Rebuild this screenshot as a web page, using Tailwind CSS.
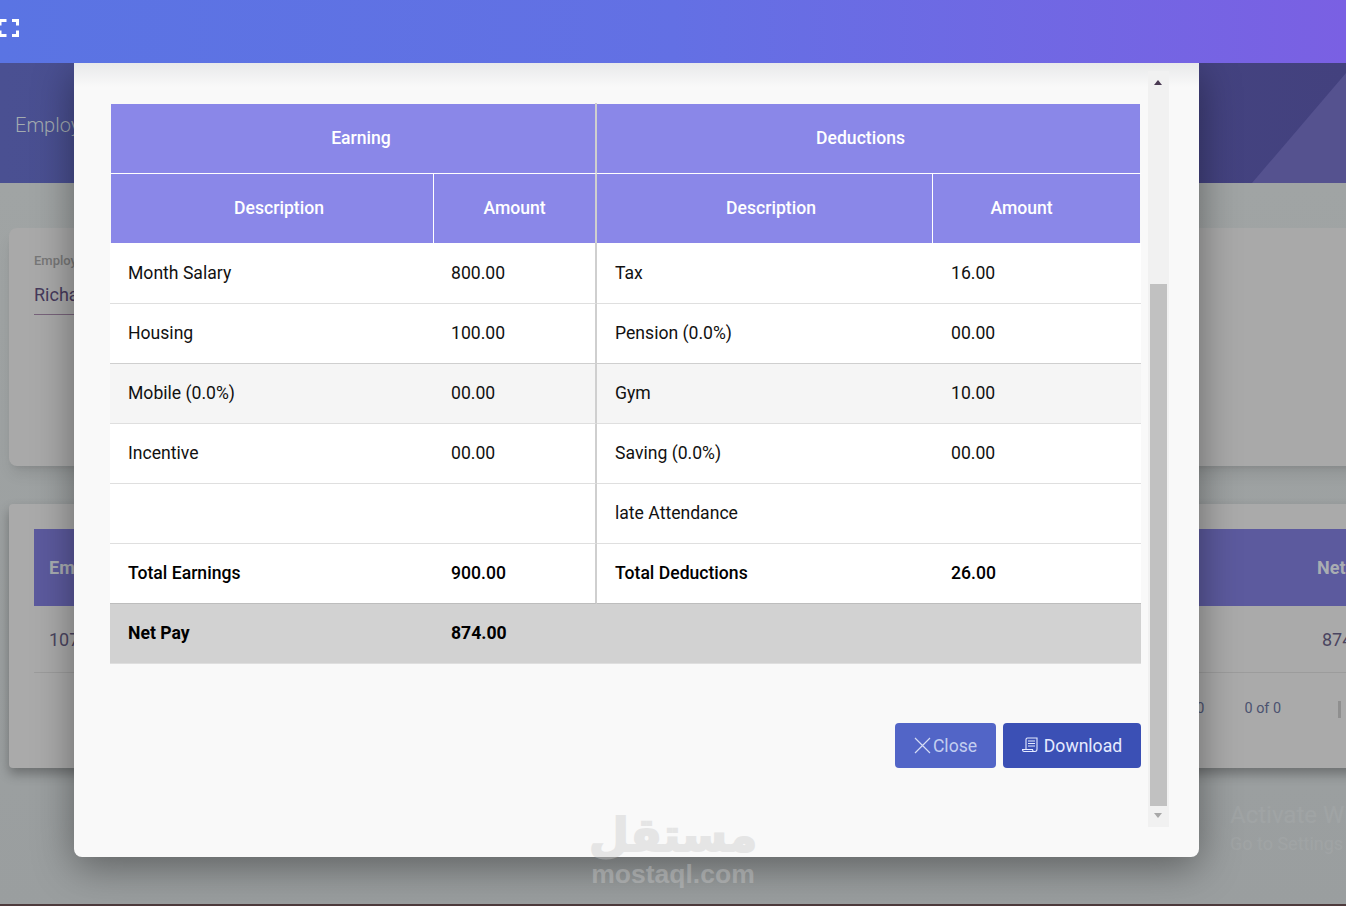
<!DOCTYPE html>
<html lang="en">

<head>
    <meta charset="UTF-8" />
    <title>Employee Salary</title>
    <script src="https://cdn.jsdelivr.net/npm/@tailwindcss/browser@4"></script>
</head>

<body class="bg-[#a0a4a4] font-['Roboto',sans-serif] overflow-hidden">

    <div class="relative w-[1346px] h-[906px] overflow-hidden">

        <!-- top bar -->
        <header class="relative z-20 h-[63px] bg-gradient-to-r from-[#5a74e3] via-[#6370e4] to-[#7a60e3] flex items-center">
            <svg class="w-[19px] h-[18px] mt-[-7px]" viewBox="0 0 19 18" fill="none" stroke="#fff" stroke-width="3">
                <path d="M0 6.500V1.500H6.500M12 1.500H17.500V6.500M17.500 11.500V16.500H12M6.500 16.500H0V11.500" />
            </svg>
        </header>

        <!-- page behind the dialog -->
        <section class="relative h-[120px] bg-gradient-to-r from-[#4a5092] to-[#43417e] flex items-center pl-[15px] pt-[3px] overflow-hidden">
            <h1 class="text-[20px] font-light text-[#a3abb0]">Employee Salary</h1>
            <div class="absolute right-0 bottom-0 w-[94px] h-[110px] bg-[#55528f] [clip-path:polygon(100%_0,100%_100%,0_100%)]"></div>
        </section>

        <div class="pt-[45px] pl-[9px] bg-gradient-to-b from-[#a0a4a4] to-[#9a9e9f] h-[721px]">
            <div class="h-[238px] w-[1400px] rounded-lg bg-[#a9a9a9] pl-[25px] pt-[23px] shadow-lg">
                <p class="text-[13px] font-medium text-[#777]">Employee</p>
                <p class="w-[200px] mt-[10px] pb-[6px] text-[18px] text-[#463a5c] border-b border-[#77637a]">Richard</p>
            </div>
            <div class="mt-[38px] h-[264px] w-[1400px] rounded-sm bg-[#aaaaaa] pt-[25px] pl-[25px] shadow-[0_6px_12px_rgba(0,0,0,0.3)]">
                <div class="w-[1312px] h-[77px] bg-[#5c5a9e] flex items-center justify-between px-[15px] text-[18px] font-bold text-[#a9adb2]">
                    <span>Employee</span>
                    <span class="w-[30px] whitespace-nowrap mr-[-16px]">Net Pay</span>
                </div>
                <div class="w-[1312px] h-[67px] border-b border-[#9c9c9c] flex items-center justify-between px-[15px] text-[18px] text-[#4a4560]">
                    <span>1075</span>
                    <span class="w-[25px] whitespace-nowrap mr-[-16px]">874.00</span>
                </div>
                <div class="w-[1312px] h-[70px] pt-[2px] flex items-center justify-end text-[14.400px] text-[#4b5270]">
                    <span class="mr-[40px]">10</span>
                    <span class="mr-[57px]">0 of 0</span>
                    <span class="w-[3px] h-[17px] mr-[5px] bg-[#8f8f8f]"></span>
                </div>
            </div>
        </div>
        <div class="absolute left-0 right-0 bottom-0 h-[2px] bg-[#4d3a3c]"></div>

        <!-- activate windows note -->
        <div class="absolute left-[1230px] top-[799px] text-white/5 whitespace-nowrap">
            <p class="text-[24px] leading-[32px]">Activate Windows</p>
            <p class="text-[18px] leading-[26px]">Go to Settings to activate Windows.</p>
        </div>

        <!-- dialog -->
        <div class="absolute z-10 left-[74px] top-[63px] w-[1125px] h-[794px] bg-[#f9f9f9] rounded-b-lg shadow-[0_10px_40px_rgba(0,0,0,0.4)] pt-[41px] pl-[36px]">
            <div class="absolute left-0 right-0 top-0 h-[24px] bg-gradient-to-b from-[#e8e9ea] to-[#f9f9f9]/0"></div>
            <div class="absolute left-[521px] top-[40px] w-[2px] h-px bg-[#cfcfcf]"></div>

            <table class="relative w-[1031px] table-fixed border-separate border-spacing-0 text-[17.600px] text-[#111]">
                <colgroup>
                    <col class="w-[324px]" />
                    <col class="w-[163px]" />
                    <col class="w-[336px]" />
                    <col class="w-[208px]" />
                </colgroup>
                <thead class="bg-[#8a87e8] text-white">
                    <tr class="h-[70px]">
                        <th colspan="2" class="pl-[16px] font-medium bg-[#8a87e8] border-l border-l-[#f9f9f9] border-b border-b-white border-r-2 border-r-[#cfcfcf]">Earning</th>
                        <th colspan="2" class="pr-[16px] font-medium bg-[#8a87e8] border-r border-r-[#f9f9f9] border-b border-b-white">Deductions</th>
                    </tr>
                    <tr class="h-[69px]">
                        <th class="pl-[14px] font-medium bg-[#8a87e8] border-l border-l-[#f9f9f9] border-r border-r-white">Description</th>
                        <th class="font-medium bg-[#8a87e8] border-r-2 border-r-[#cfcfcf]">Amount</th>
                        <th class="pl-[13px] font-medium bg-[#8a87e8] border-r border-r-white">Description</th>
                        <th class="pr-[30px] font-medium bg-[#8a87e8] border-r border-r-[#f9f9f9]">Amount</th>
                    </tr>
                </thead>
                <tbody class="bg-white">
                    <tr class="h-[61px]">
                        <td class="pl-[18px] border-b border-[#dfdfdf]">Month Salary</td>
                        <td class="pl-[17px] border-b border-b-[#dfdfdf] border-r-2 border-r-[#cfcfcf]">800.00</td>
                        <td class="pl-[18px] border-b border-[#dfdfdf]">Tax</td>
                        <td class="pl-[18px] border-b border-[#dfdfdf]">16.00</td>
                    </tr>
                    <tr class="h-[60px]">
                        <td class="pl-[18px] border-b border-[#cfcfcf]">Housing</td>
                        <td class="pl-[17px] border-b border-b-[#cfcfcf] border-r-2 border-r-[#cfcfcf]">100.00</td>
                        <td class="pl-[18px] border-b border-[#cfcfcf]">Pension (0.0%)</td>
                        <td class="pl-[18px] border-b border-[#cfcfcf]">00.00</td>
                    </tr>
                    <tr class="h-[60px] bg-[#f5f5f5]">
                        <td class="pl-[18px] border-b border-[#dfdfdf]">Mobile (0.0%)</td>
                        <td class="pl-[17px] border-b border-b-[#dfdfdf] border-r-2 border-r-[#cfcfcf]">00.00</td>
                        <td class="pl-[18px] border-b border-[#dfdfdf]">Gym</td>
                        <td class="pl-[18px] border-b border-[#dfdfdf]">10.00</td>
                    </tr>
                    <tr class="h-[60px]">
                        <td class="pl-[18px] border-b border-[#dfdfdf]">Incentive</td>
                        <td class="pl-[17px] border-b border-b-[#dfdfdf] border-r-2 border-r-[#cfcfcf]">00.00</td>
                        <td class="pl-[18px] border-b border-[#dfdfdf]">Saving (0.0%)</td>
                        <td class="pl-[18px] border-b border-[#dfdfdf]">00.00</td>
                    </tr>
                    <tr class="h-[60px]">
                        <td class="border-b border-[#dfdfdf]"></td>
                        <td class="border-b border-b-[#dfdfdf] border-r-2 border-r-[#cfcfcf]"></td>
                        <td class="pl-[18px] border-b border-[#dfdfdf]">late Attendance</td>
                        <td class="border-b border-[#dfdfdf]"></td>
                    </tr>
                    <tr class="h-[60px] font-medium text-black">
                        <td class="pl-[18px] border-b border-[#bdbdbd]">Total Earnings</td>
                        <td class="pl-[17px] border-b border-b-[#bdbdbd] border-r-2 border-r-[#cfcfcf]">900.00</td>
                        <td class="pl-[18px] border-b border-[#bdbdbd]">Total Deductions</td>
                        <td class="pl-[18px] border-b border-[#bdbdbd]">26.00</td>
                    </tr>
                    <tr class="h-[60px] bg-[#d2d2d2] font-bold text-black">
                        <td class="pl-[18px] border-b border-[#dfdfdf]">Net Pay</td>
                        <td class="pl-[17px] border-b border-[#dfdfdf]">874.00</td>
                        <td class="border-b border-[#dfdfdf]"></td>
                        <td class="border-b border-[#dfdfdf]"></td>
                    </tr>
                </tbody>
            </table>

            <div class="w-[1031px] mt-[59px] flex justify-end gap-[7px] text-[17.600px]">
                <button class="h-[45px] w-[101px] pt-[1px] rounded bg-[#5265c7] text-[#c3cef0] flex items-center justify-center gap-[2px]">
                    <svg class="w-[17px] h-[17px] mb-[2px]" viewBox="0 0 17 17" fill="none" stroke="#d5dcf5" stroke-width="1.200">
                        <path d="M1 1L16 16M16 1L1 16" />
                    </svg>
                    Close
                </button>
                <button class="h-[45px] w-[138px] pt-[1px] rounded bg-[#3b50b5] text-[#e6ebff] flex items-center justify-center gap-[6px]">
                    <svg class="w-[16px] h-[16px] mb-[3px]" viewBox="0 0 16 16" fill="none" stroke="#e6ebff" stroke-width="1.100">
                        <path d="M4 12V2.500C4 1.500 4.500 1 5.500 1H15V12C15 13.500 14 14.500 13 14.500H2C1 14.500 0.500 13.500 0.500 12.500H10.500C10.500 13.500 11 14.500 12 14.500" />
                        <path d="M6 4H13M6 6.500H13M6 9H13" />
                    </svg>
                    Download
                </button>
            </div>

            <!-- scrollbar -->
            <div class="absolute left-[1074px] top-[8px] w-[21px] h-[756px] bg-[#f1f1f1]">
                <div class="absolute left-[6px] top-[9px] w-0 h-0 border-x-[4.500px] border-x-transparent border-b-[5px] border-b-[#4a3a52]"></div>
                <div class="absolute left-[2px] top-[213px] w-[17px] h-[522px] bg-[#c1c1c1]"></div>
                <div class="absolute left-[6px] bottom-[9px] w-0 h-0 border-x-[4.500px] border-x-transparent border-t-[5px] border-t-[#a8a8a8]"></div>
            </div>
        </div>

        <!-- watermark -->
        <div class="absolute z-30 left-[540px] top-[809px] w-[266px] text-center text-[#c8c8c8] opacity-40 font-bold">
            <p class="text-[46px] leading-[52px] font-['DejaVu_Sans',sans-serif] [-webkit-text-stroke:2px_#c8c8c8]" dir="rtl">مستقل</p>
            <p class="text-[26.500px] leading-[26px] font-['Liberation_Sans',sans-serif]">mostaql.com</p>
        </div>
    </div>

</body>

</html>
